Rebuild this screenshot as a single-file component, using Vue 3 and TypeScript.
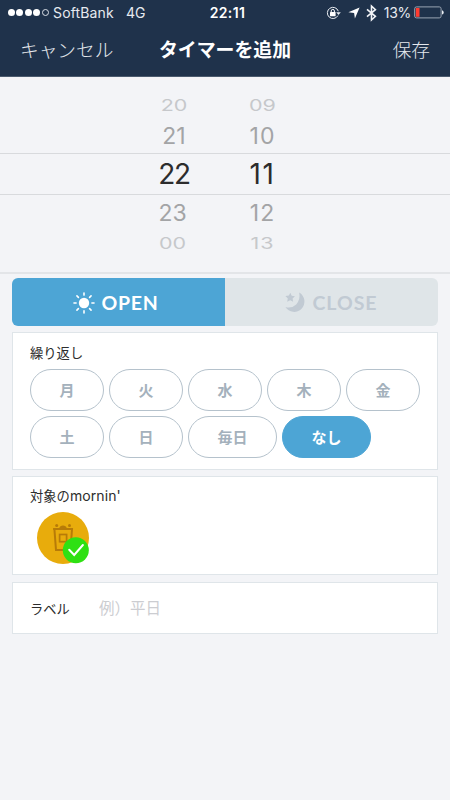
<script setup lang="ts">
import { ref } from 'vue'

interface PickerRow {
  hour: string
  minute: string
  tone: string
}

const pickerRows: PickerRow[] = [
  { hour: '20', minute: '09', tone: 'far' },
  { hour: '21', minute: '10', tone: 'near' },
  { hour: '22', minute: '11', tone: 'current' },
  { hour: '23', minute: '12', tone: 'near low' },
  { hour: '00', minute: '13', tone: 'far low' },
]

const days: string[] = ['月', '火', '水', '木', '金', '土', '日', '毎日', 'なし']
const selectedDay = ref<string>('なし')
const mode = ref<'open' | 'close'>('open')
const label = ref<string>('')
const rays: number[] = [0, 45, 90, 135, 180, 225, 270, 315]
</script>

<template>
  <div class="screen">
    <header class="header">
      <div class="status">
        <div class="status-left">
          <span class="signal">
            <i v-for="n in 5" :key="n" :class="{ empty: n === 5 }"></i>
          </span>
          <span class="carrier">SoftBank</span>
          <span class="network">4G</span>
        </div>
        <span class="clock">22:11</span>
        <div class="status-right">
          <svg class="lock" width="15" height="14" viewBox="0 0 15 14">
            <path d="M11.9 9.6A5.6 5.6 0 1 1 12.3 5.2" fill="none" stroke="#e9edf2" stroke-width="1" />
            <path d="M10.2 6.2h4.6l-2.3 2.8z" fill="#e9edf2" />
            <rect x="4" y="6" width="5.6" height="4.2" rx=".5" fill="#fff" />
            <path d="M5.2 6.4V5a1.6 1.6 0 0 1 3.2 0v1.4" fill="none" stroke="#fff" stroke-width="1" />
          </svg>
          <svg class="arrow" width="12" height="12" viewBox="0 0 12 12">
            <path d="M11.6.4L6.9 11.4 6.1 6 .4 5.3z" fill="#fff" />
          </svg>
          <svg class="bluetooth" width="11" height="16" viewBox="0 0 11 16">
            <path d="M1 4.4l8.4 7L5.5 15V1l3.9 3.6-8.4 7" fill="none" stroke="#f2f4f7" stroke-width="1.6" />
          </svg>
          <span class="percent">13%</span>
          <svg class="battery" width="31" height="13" viewBox="0 0 31 13">
            <rect x=".7" y=".9" width="26.4" height="11" rx="1.8" fill="none" stroke="#9aa5b3" stroke-width="1" />
            <rect x="1.8" y="2" width="3.7" height="8.8" fill="#ff3b30" />
            <path d="M28 4.2q1.7.5 1.7 2.2T28 8.600z" fill="#e9edf2" />
          </svg>
        </div>
      </div>
      <nav class="nav">
        <span class="nav-cancel">キャンセル</span>
        <h1>タイマーを追加</h1>
        <span class="nav-save">保存</span>
      </nav>
    </header>

    <section class="picker">
      <div v-for="row in pickerRows" :key="row.hour" class="picker-row" :class="row.tone">
        <span class="hour"><b>{{ row.hour }}</b></span>
        <span class="minute"><b>{{ row.minute }}</b></span>
      </div>
    </section>

    <main class="content">
      <div class="segments">
        <button class="segment first" :class="{ active: mode === 'open' }" @click="mode = 'open'">
          <svg class="sun" width="22" height="22" viewBox="-11 -11 22 22">
            <circle r="5.2" fill="currentColor" />
            <path
              v-for="angle in rays"
              :key="angle"
              d="M0-7.9V-10"
              :transform="`rotate(${angle})`"
              stroke="currentColor"
              stroke-width="1.6"
              stroke-linecap="round"
            />
          </svg>
          <span>OPEN</span>
        </button>
        <button class="segment second" :class="{ active: mode === 'close' }" @click="mode = 'close'">
          <svg class="moon" width="20" height="20" viewBox="0 0 20 20">
            <path d="M14.2.6A10.3 10.3 0 1 1 .4 15Q6.6 16.8 11.2 12.4 15.6 7.8 14.2.6z" fill="currentColor" />
            <path d="M5.3.8L6.7 3.7 9.9 4.2 7.6 6.5 8.1 9.8 5.2 8.2 2.2 9.7 2.8 6.4.4 4 3.9 3.6z" fill="currentColor" />
          </svg>
          <span>CLOSE</span>
        </button>
      </div>

      <section class="card repeat">
        <h2>繰り返し</h2>
        <div class="chips">
          <button
            v-for="day in days"
            :key="day"
            class="chip"
            :class="{ wide: day.length > 1, selected: selectedDay === day }"
            @click="selectedDay = day"
          >{{ day }}</button>
        </div>
      </section>

      <section class="card target">
        <h2>対象の<span class="latin">mornin'</span></h2>
        <svg class="device" width="52" height="52" viewBox="0 0 52 52">
          <circle cx="26" cy="26" r="26" fill="#e8ac0c" />
          <g fill="none" stroke="#b77b08">
            <path d="M17.4 17H35L33.5 38H19z" stroke-width="2" />
            <rect x="22.6" y="22.5" width="7" height="7.2" stroke-width="1.7" />
          </g>
          <path d="M16.2 16H36V18H16.2z" fill="#b77b08" />
          <path d="M22 16.500q1-3 4-3t4 3z" fill="#b77b08" />
          <circle cx="19.7" cy="13.4" r="1.5" fill="#b77b08" />
          <circle cx="32.5" cy="13.4" r="1.5" fill="#b77b08" />
          <circle cx="38.8" cy="38.3" r="13" fill="#2fe013" />
          <path d="M32.2 37.7l5 5.3 8.700-10" fill="none" stroke="#fff" stroke-width="2" stroke-linecap="round" />
        </svg>
      </section>

      <label class="card label-card">
        <span>ラベル</span>
        <input v-model="label" type="text" placeholder="例）平日" />
      </label>
    </main>
  </div>
</template>

<style>
body {
  background: #f3f4f7;
}
</style>

<style scoped>
.screen {
  width: 450px;
  height: 800px;
  overflow: hidden;
  background: #f3f4f7;
  color: #2d2d2d;
  font-family: Inter, 'Noto Sans CJK JP', sans-serif;
}

button,
input {
  margin: 0;
  padding: 0;
  border: 0;
  font-family: inherit;
}

svg {
  display: block;
  flex: none;
  overflow: visible;
}

.header {
  height: 77px;
  box-sizing: border-box;
  background: #1f324b;
  border-bottom: 1px solid #4a5a6e;
  color: #fff;
}

.status {
  height: 25px;
  display: grid;
  grid-template-columns: 1fr 60px 1fr;
  align-items: center;
  font-size: 14px;
  line-height: 25px;
}

.status-left,
.status-right {
  display: flex;
  align-items: center;
  color: #e6eaf0;
}

.status-left {
  padding-left: 8px;
}

.signal {
  display: flex;
  gap: 1.4px;
  width: 45px;
}

.signal i {
  width: 7px;
  height: 7px;
  border-radius: 50%;
  background: #fff;
}

.signal i.empty {
  box-sizing: border-box;
  background: none;
  border: 1px solid #dbe0e7;
}

.carrier {
  width: 73px;
  letter-spacing: 0.15px;
}

.network {
  letter-spacing: -0.1px;
}

.clock {
  text-align: center;
  font-weight: 600;
  letter-spacing: 0.4px;
  padding-left: 5px;
}

.status-right {
  justify-content: flex-end;
  padding-right: 5px;
}

.lock {
  margin-right: 7px;
}

.arrow {
  margin-right: 6px;
}

.bluetooth {
  margin-right: 7px;
}

.percent {
  margin-right: 3px;
  letter-spacing: -0.3px;
}

.nav {
  height: 50px;
  display: grid;
  grid-template-columns: 1fr auto 1fr;
  align-items: center;
  padding: 0 20px;
  font-size: 18.7px;
  line-height: 52px;
  color: #e4e8ed;
  font-weight: 300;
}

.nav h1 {
  margin: 0;
  font-size: 18.9px;
  font-weight: 700;
  color: #fff;
}

.nav-save {
  text-align: right;
}

.picker {
  height: 197px;
  box-sizing: border-box;
  padding-top: 16px;
  border-bottom: 2px solid #e3e5e8;
}

.picker-row {
  display: grid;
  grid-template-columns: 88px 89px;
  padding-left: 130px;
  box-sizing: border-box;
  color: #a3a4a6;
}

.picker-row span {
  display: flex;
  justify-content: center;
  align-items: center;
}

.picker-row b {
  display: block;
  font-weight: 400;
}

.far {
  height: 24px;
  font-size: 21.5px;
  line-height: 24px;
  color: #c6c8cb;
}

.far b {
  transform: scaleY(0.72);
}

.far.low {
  padding-top: 1px;
}

.far.low .minute {
  letter-spacing: 1px;
}

.near {
  height: 36px;
  padding-top: 1px;
  font-size: 23px;
  line-height: 36px;
}

.near.low {
  height: 35px;
  line-height: 35px;
}

.near .minute {
  letter-spacing: 1px;
}

.low .hour {
  padding-right: 3px;
}

.current {
  height: 42px;
  border-top: 1px solid #d8dadd;
  border-bottom: 1px solid #d8dadd;
  font-size: 28px;
  line-height: 41px;
  letter-spacing: -1.3px;
  color: #2c2c2d;
}

.current .minute {
  letter-spacing: 1.5px;
}

.content {
  display: flex;
  flex-direction: column;
  padding: 4px 12px 0;
}

.segments {
  display: grid;
  grid-template-columns: 1fr 1fr;
  height: 48px;
  border-radius: 6px;
  overflow: hidden;
}

.segment {
  display: flex;
  justify-content: center;
  align-items: center;
  gap: 7px;
  background: #dfe5e8;
  color: #c1cad3;
  font-family: Lato, sans-serif;
  font-size: 19.5px;
  font-weight: 700;
  line-height: 50px;
}

.segment.first {
  padding-right: 6px;
  letter-spacing: 0.7px;
}

.segment.second {
  letter-spacing: 1px;
}

.segment.active {
  background: #4da5d5;
  color: #fff;
}

.moon {
  margin-bottom: 2px;
}

.card {
  box-sizing: border-box;
  background: #fff;
  border: 1px solid #dfe5e9;
}

.card h2 {
  margin: 0;
  font-size: 13.3px;
  font-weight: 400;
  line-height: 20px;
}

.repeat {
  height: 138px;
  margin-top: 6px;
  padding: 10px 17px 0;
}

.chips {
  display: flex;
  flex-wrap: wrap;
  gap: 5px;
  margin-top: 6px;
}

.chip {
  width: 74px;
  height: 42px;
  box-sizing: border-box;
  padding-bottom: 2px;
  border: 1px solid #b5c2cc;
  border-radius: 21px;
  background: #fff;
  color: #a4b1bc;
  font-size: 15px;
  font-weight: 700;
}

.chip.wide {
  width: 89px;
}

.chip.selected {
  background: #4da5d5;
  border-color: #4da5d5;
  color: #fff;
}

.target {
  height: 99px;
  margin-top: 6px;
  padding: 9px 17px 0;
}

.latin {
  font-size: 14px;
  letter-spacing: 0.1px;
}

.device {
  margin: 6px 0 0 7px;
}

.label-card {
  display: flex;
  align-items: center;
  height: 52px;
  margin-top: 7px;
  padding-left: 17px;
  font-size: 13.3px;
}

.label-card span {
  width: 69px;
}

.label-card input {
  width: 300px;
  height: 40px;
  outline: none;
  background: transparent;
  font-size: 15.5px;
}

.label-card input::placeholder {
  color: #cccdd1;
}
</style>
